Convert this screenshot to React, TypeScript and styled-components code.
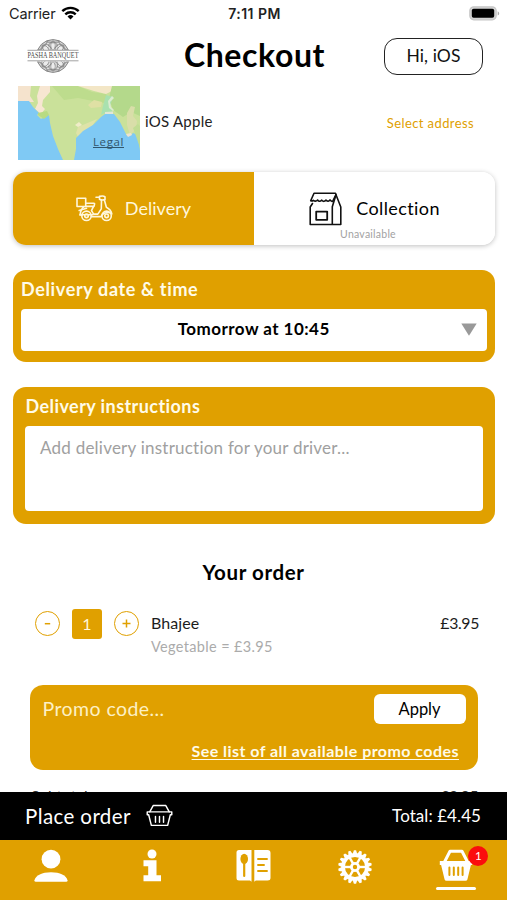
import React from "react";
import styled, { createGlobalStyle } from "styled-components";

const AMBER = "#e0a000";

const GlobalStyle = createGlobalStyle`
  *, *::before, *::after { box-sizing: border-box; }
  body { margin: 0; background: #fff; font-family: Lato, "Open Sans", sans-serif; color: #000; }
  h1, h2 { margin: 0; }
  svg { display: block; flex: none; }
  button, input, textarea { font-family: inherit; border: 0; margin: 0; padding: 0; outline: 0; }
`;

const Screen = styled.div`
  width: 507px;
  height: 900px;
  display: flex;
  flex-direction: column;
  overflow: hidden;
  background: #fff;
`;

const Scroll = styled.main`
  flex: 1;
  min-height: 0;
  overflow: hidden;
`;

const Text = styled.span<{ $size: number; $ls?: number; $bold?: boolean; $color?: string; $line?: number }>`
  font-size: ${(p) => p.$size}px;
  letter-spacing: ${(p) => p.$ls ?? 0}px;
  font-weight: ${(p) => (p.$bold ? 700 : 400)};
  color: ${(p) => p.$color ?? "#000"};
  line-height: ${(p) => p.$line ?? 24}px;
  white-space: nowrap;
`;

const StatusBar = styled.div`
  display: grid;
  grid-template-columns: 1fr auto 1fr;
  align-items: center;
  height: 26px;
  padding: 0 7px 0 9px;
  font-family: Inter, sans-serif;
`;

const StatusLeft = styled.div`
  display: flex;
  align-items: center;
  gap: 6px;
  font-size: 14.5px;
  letter-spacing: -0.15px;
  color: #222;
`;

const Clock = styled.div`
  font-size: 14px;
  font-weight: 600;
  letter-spacing: 0.45px;
  color: #222;
`;

const StatusRight = styled.div`
  display: flex;
  justify-content: flex-end;
`;

const Header = styled.header`
  display: grid;
  grid-template-columns: 1fr auto 1fr;
  align-items: center;
  height: 60px;
  padding: 0 24px 0 26px;
  > h1 { padding-bottom: 2px; }
`;

const HelloButton = styled.button`
  justify-self: end;
  width: 99px;
  height: 37px;
  padding-bottom: 2px;
  border: 1.5px solid #222;
  border-radius: 13px;
  background: #fff;
  font-size: 17.5px;
  letter-spacing: 0.1px;
  color: #111;
`;

const AddressRow = styled.section`
  display: flex;
  align-items: center;
  height: 74px;
  padding: 0 33px 0 18px;
`;

const AddressName = styled.div`
  padding-bottom: 4px;
`;

const MapThumb = styled.div`
  display: grid;
  width: 122px;
  height: 74px;
  margin-right: 5px;
  > * { grid-area: 1 / 1; }
`;

const Legal = styled.span`
  align-self: end;
  justify-self: end;
  margin: 0 16px 10px 0;
  font: 11.5px/16px "Open Sans", sans-serif;
  letter-spacing: 0.6px;
  color: #31566d;
  text-decoration: underline;
  text-decoration-skip-ink: none;
`;

const Push = styled.div`
  margin-left: auto;
  padding-bottom: 1px;
`;

const Toggle = styled.section`
  display: grid;
  grid-template-columns: 1fr 1fr;
  height: 73px;
  margin: 12px 12px 0 13px;
  border-radius: 13px;
  overflow: hidden;
  box-shadow: 0 1px 5px rgba(0, 0, 0, 0.25);
`;

const ToggleOption = styled.div<{ $active?: boolean }>`
  display: grid;
  grid-template-rows: 1fr auto;
  justify-items: center;
  background: ${(p) => (p.$active ? AMBER : "#fff")};
`;

const ToggleLabel = styled.div<{ $gap: number }>`
  grid-row: 1 / 3;
  grid-column: 1;
  display: flex;
  align-items: center;
  gap: ${(p) => p.$gap}px;
  > span { padding-bottom: 2px; }
`;

const ToggleNote = styled.div`
  grid-row: 2;
  grid-column: 1;
  margin: 0 0 4px -13px;
  font-size: 10.5px;
  line-height: 14px;
  letter-spacing: 0.24px;
  color: #a2a2a2;
`;

const Panel = styled.section<{ $top: number; $inset: number; $height: number }>`
  height: ${(p) => p.$height}px;
  margin: ${(p) => p.$top}px 12.5px 0 13px;
  padding: 7px ${(p) => p.$inset}px 0;
  border-radius: 13px;
  background: ${AMBER};
`;

const PanelTitle = styled.h2<{ $ls: number }>`
  margin: 0 0 7.5px 0.5px;
  font-size: 18px;
  line-height: 24px;
  font-weight: 700;
  letter-spacing: ${(p) => p.$ls}px;
  color: #fffbe8;
`;

const TimeSelect = styled.div`
  display: grid;
  grid-template-columns: 37px 1fr 37px;
  align-items: center;
  justify-items: center;
  height: 42px;
  border-radius: 4px;
  background: #fff;
  > span { padding-bottom: 1px; }
`;

const Instructions = styled.textarea`
  display: block;
  width: 100%;
  height: 85.5px;
  padding: 10px 15px;
  border-radius: 4px;
  resize: none;
  font-size: 17px;
  line-height: 24px;
  letter-spacing: 0.23px;
  &::placeholder { color: #a0a0a0; opacity: 1; }
`;

const OrderTitle = styled.h2`
  margin: 35px 0 0;
  text-align: center;
  font-size: 20.5px;
  line-height: 26px;
  letter-spacing: 0.6px;
`;

const OrderItem = styled.section`
  display: flex;
  align-items: flex-start;
  height: 61px;
  margin-top: 24px;
  padding: 0 28px 0 35px;
`;

const Stepper = styled.div`
  display: flex;
  align-items: center;
  gap: 12px;
  height: 30px;
  margin-right: 12px;
`;

const StepButton = styled.button`
  display: grid;
  place-items: center;
  width: 25px;
  height: 25px;
  border: 1.4px solid ${AMBER};
  border-radius: 50%;
  background: #fff;
`;

const Quantity = styled.div`
  width: 30px;
  height: 30px;
  border-radius: 3px;
  background: ${AMBER};
  color: #fff7dc;
  font-size: 16px;
  line-height: 29px;
  text-align: center;
`;

const ItemInfo = styled.div`
  display: flex;
  flex-direction: column;
  flex: 1;
  padding-top: 2.5px;
`;

const ItemPrice = styled.div`
  padding-top: 2.5px;
`;

const Promo = styled.section`
  display: flex;
  flex-direction: column;
  height: 85px;
  margin: 15px 29px 0 30px;
  padding: 9px 12.5px 0;
  border-radius: 13px;
  background: ${AMBER};
`;

const PromoRow = styled.div`
  display: flex;
  align-items: center;
  justify-content: space-between;
`;

const PromoInput = styled.input`
  width: 200px;
  background: none;
  font-size: 19.5px;
  letter-spacing: 0.42px;
  &::placeholder { color: #fdf0c4; opacity: 1; }
`;

const ApplyButton = styled.button`
  width: 92px;
  height: 30.5px;
  border-radius: 6px;
  background: #fff;
  font-size: 16.5px;
  letter-spacing: -0.05px;
  color: #000;
`;

const PromoLink = styled.a`
  align-self: flex-end;
  margin: 15px 6.5px 0 0;
  font-size: 16px;
  font-weight: 700;
  line-height: 24px;
  letter-spacing: 0.45px;
  color: #fffbe8;
  text-decoration: underline;
  text-decoration-skip-ink: none;
  text-underline-offset: 1.5px;
  text-decoration-thickness: 1px;
`;

const SummaryRow = styled.div`
  display: flex;
  justify-content: space-between;
  margin-top: 14px;
  padding: 0 29px 0 31px;
`;

const CheckoutBar = styled.div`
  display: flex;
  align-items: center;
  height: 48.5px;
  padding: 0 26px 0 25px;
  background: #000;
`;

const BasketSlot = styled.div`
  margin: 0 auto 0 15px;
`;

const TabBar = styled.nav`
  display: grid;
  grid-template-columns: repeat(5, 101.4px);
  height: 60px;
  background: ${AMBER};
`;

const Tab = styled.div`
  display: flex;
  flex-direction: column;
  align-items: center;
  padding-top: 9px;
`;

const BasketTab = styled.div`
  position: relative;
`;

const Badge = styled.span`
  position: absolute;
  top: -3px;
  right: -15px;
  width: 20px;
  height: 20px;
  border-radius: 50%;
  background: #fb0d0d;
  color: #fff;
  font-size: 11.5px;
  line-height: 20px;
  text-align: center;
`;

const ActiveLine = styled.div`
  width: 40px;
  height: 3px;
  margin-top: 5px;
  border-radius: 2px;
  background: #fff;
`;

function WifiIcon() {
  return (
    <svg width="19" height="14" viewBox="0 0 19 14" fill="none" stroke="#000" strokeWidth="2.4">
      <path d="M1.3 5.2a11.8 11.8 0 0 1 16.4 0M4.3 8.3a7.5 7.5 0 0 1 10.4 0" />
      <path d="M9.5 13.4 6.5 10.4a4.4 4.4 0 0 1 6 0z" fill="#000" stroke="none" />
    </svg>
  );
}

function BatteryIcon() {
  return (
    <svg width="31" height="15" viewBox="0 0 31 15">
      <rect x=".8" y=".8" width="26.4" height="13" rx="4" fill="#d4d4d4" stroke="#c6c6c6" strokeWidth="1.2" />
      <rect x="2.8" y="2.8" width="22.4" height="9" rx="1.8" fill="#000" />
      <path d="M28.7 5.2c2 .8 2 3.6 0 4.4z" fill="#aaa" />
    </svg>
  );
}

function PashaLogo() {
  const petals = [0, 45, 90, 135, 180, 225, 270, 315];
  return (
    <svg width="54" height="38" viewBox="0 0 54 38">
      <circle cx="27" cy="19" r="16.6" fill="#dcdcdc" />
      <g fill="none" stroke="#858585" strokeWidth="1">
        <circle cx="27" cy="19" r="16.4" />
        <circle cx="27" cy="19" r="14.6" strokeWidth=".5" />
        {petals.map((a) => (
          <g key={a} transform={`rotate(${a} 27 19)`}>
            <circle cx="27" cy="9.6" r="4.5" fill="#f6f6f6" fillOpacity=".6" />
            <path d="M27 3.5c3 3 3 7 0 10c-3-3-3-7 0-10z" strokeWidth=".8" />
            <path d="M20 4.5q7 3 14 0" strokeWidth=".7" />
          </g>
        ))}
      </g>
      <rect x="1" y="13" width="52" height="11.5" fill="#fff" />
      <path d="M1.5 13.3h51M1.5 23.8h51" stroke="#8a8a8a" strokeWidth=".8" />
      <text x="1.5" y="21" textLength="51" lengthAdjust="spacingAndGlyphs" fontFamily="Liberation Serif, serif" fontSize="7.6" fill="#4a4a4a">PASHA BANQUET</text>
    </svg>
  );
}

function MapPicture() {
  return (
    <svg width="122" height="74" viewBox="0 0 122 74">
      <rect width="122" height="74" fill="#cae19a" />
      <path d="M34 0h26l14 6 14 2 6 10-14-2-20-4-14 2z" fill="#bddc8d" />
      <path d="M0 0h13l-1 10 4 6H0z" fill="#f5e3cd" />
      <path d="M22 0h10l0 6-7 8-1 6 3 3-4 5-6-5 3-6-1-7z" fill="#f7e6d2" />
      <path d="M60 0h34l0 5-6 3-12-3z" fill="#f3e6c6" />
      <path d="M94 0h28v30l-9-4-8 5-10-7-4-12z" fill="#b4d98b" />
      <path d="M70 19l6-5 8 2-1 5-10 1z" fill="#dfe0a4" />
      <path d="M88 9l7 2-3 9 3 8-8-1-4 2 2-9z" fill="#a9e1af" />
      <path d="M94 10l2 2-4 4 1 5 3 3-1 1-4-3-1-7z" fill="#dcebd0" />
      <path d="M113 20l4 1-2 9 4 5-1 8-6 6-3-10 0-12z" fill="#d9dea9" />
      <path d="M60 41l19-8-5 7-8 6-6 5-2-4z" fill="#dfe3a8" />
      <path d="M57 39l4-3 3 3-4 2z" fill="#f0ecc8" />
      <path d="M0 15h11l4 6 6 6-2 2 4 4 8-4 1 8 3 13 5 13 5 11H0z" fill="#7fc9f4" />
      <path d="M20 27l9-2 2 4-5 4-6-4z" fill="#b8db82" />
      <path d="M56 74l2-11 0-11 7-7 10-6 8-8 4-3 9 0 6 8 4 8 3 6 4-1 2-2 5 2 2 16v9z" fill="#7fc9f4" />
      <path d="M108 48l5-1 1 2-4 2z" fill="#ece3d0" />
      <path d="M87 26l8-.5 0 2.5h-8z" fill="#e2e6d6" />
      <path d="M115 42l5-4 2 2v22l-3-9z" fill="#c1dd94" />
    </svg>
  );
}

function ScooterIcon() {
  return (
    <svg width="37" height="27" viewBox="0 0 37 27" fill="none" stroke="#fff7dc" strokeWidth="1.6" strokeLinejoin="round" strokeLinecap="round">
      <path d="M1 3.3h8.7v8.2H1z" />
      <path d="M10 8.2h7.8q1 0 .7 1.2l-.5 2H9.8" />
      <path d="M8 11.7q-3.2 2.5-4 8.3h2.2M17.4 11.6l-1.9 4 2.1 3.5h4.2l3.5-5.2.2-8.8" />
      <path d="M3.2 15.4l7.3-2.2" />
      <path d="M20 2.2h3.2M23.5 1.4q4-1 5.5.5v2.5q-3 1.2-5.5-.2z" />
      <path d="M28.3 4.7l2.1 7.6q4.6 2.3 5.4 6.6-3.2-2.3-7-.8-2.6 1.2-3.8 3.5h-9.6" />
      <circle cx="10.5" cy="20.8" r="4.7" />
      <circle cx="10.5" cy="20.8" r="1.8" />
      <circle cx="30.6" cy="20.8" r="4.7" />
      <circle cx="30.6" cy="20.8" r="1.8" />
      <path d="M4 19.8h12.8" />
    </svg>
  );
}

function BagIcon() {
  return (
    <svg width="33" height="34" viewBox="0 0 33 34" fill="none" stroke="#111" strokeWidth="1.6" strokeLinejoin="round" strokeLinecap="round">
      <path d="M5 1.2h21.5l.5 1.5-3.2 6.5q-1.6.6-2.8-1.3-1.6 2.4-4 .2-2.2 2.4-4.2.1-2.4 2.2-4.2-.2-2 2.2-4.2.3-1.2 1-2.7.5z" />
      <path d="M3.5 11.5l-2.3 3.5v17.500h30.600V15L27 2.700l-3.700 12v17.500" />
      <path d="M7.2 19.6h11v8.200h-11z" strokeWidth="1.8" />
    </svg>
  );
}

function OutlineBasketIcon() {
  return (
    <svg width="27" height="23" viewBox="0 0 28 24" fill="none" stroke="#fff" strokeWidth="1.5" strokeLinejoin="round" strokeLinecap="round">
      <path d="M3.8 8.2 7.4 1.6h13.2l3.6 6.6" />
      <path d="M1.2 8.2h25.6v3h-1.5L22.5 22.3h-17L2.7 11.2H1.2z" />
      <path d="M9.8 13v6M14 13v6M18.2 13v6" />
    </svg>
  );
}

function PersonIcon() {
  return (
    <svg width="34" height="33" viewBox="0 0 34 33" fill="#fff">
      <circle cx="17" cy="10.2" r="9.4" />
      <path d="M.5 31.2C1.600 26.400 8 23.200 17 23.200s15.400 3.200 16.500 8q.2 1.500-1.300 1.500H1.800Q.3 32.700.5 31.200z" />
    </svg>
  );
}

function InfoIcon() {
  return (
    <svg width="18" height="33" viewBox="0 0 18 33" fill="#fff">
      <circle cx="9" cy="5" r="4.5" />
      <path d="M.5 11.300h13v15H18v6H.5v-6h4.700v-9H.5z" />
    </svg>
  );
}

function MenuIcon() {
  return (
    <svg width="35" height="33" viewBox="0 0 35 33">
      <path d="M3 1h12.500v31.800L14 31.500H3Q.5 31.500.5 29V3.500Q.5 1 3 1z" fill="#fff" />
      <path d="M18.300 1H31.500Q34.500 1 34.500 4v25q0 2.500-3 2.500H19.800l-1.500 1.300z" fill="#fff" />
      <ellipse cx="8.2" cy="9.9" rx="3.8" ry="5.2" fill={AMBER} />
      <path d="M8.200 13.500V27" stroke={AMBER} strokeWidth="2.2" strokeLinecap="round" />
      <path d="M22 10h9M22 16h6M22 22h9" stroke={AMBER} strokeWidth="1.9" strokeLinecap="round" />
    </svg>
  );
}

function GearIcon() {
  const teeth = Array.from({ length: 18 }, (_, i) => i * 20);
  const spokes = [30, 90, 150, 210, 270, 330];
  return (
    <svg width="34" height="35" viewBox="-17 -18 34 35">
      {teeth.map((a) => (
        <path key={a} d="M-2.300-13-1.100-16.800h2.200L2.300-13z" fill="#fff" transform={`rotate(${a})`} />
      ))}
      <circle r="11.9" fill="none" stroke="#fff" strokeWidth="3.6" />
      {spokes.map((a) => (
        <path key={a} d="M0-3v-8" stroke="#fff" strokeWidth="2.4" transform={`rotate(${a})`} />
      ))}
      <circle r="3.6" fill="none" stroke="#fff" strokeWidth="2.8" />
    </svg>
  );
}

function SolidBasketIcon() {
  return (
    <svg width="34" height="33" viewBox="0 0 34 33">
      <path d="M5.500 13 11 2.200h12l5.500 10.800" fill="none" stroke="#fff" strokeWidth="3" strokeLinejoin="round" />
      <path d="M.8 12h32.400v4h-1.300l-3.500 14.500q-.4 1.200-1.800 1.200H7.400q-1.400 0-1.800-1.200L2.100 16H.8z" fill="#fff" />
      <path d="M10.400 18.500v7.500M14.800 18.500v7.500M19.200 18.500v7.500M23.600 18.500v7.500" stroke={AMBER} strokeWidth="2" strokeLinecap="round" />
    </svg>
  );
}

export default function App() {
  return (
    <>
      <GlobalStyle />
      <Screen>
        <Scroll>
          <StatusBar>
            <StatusLeft>
              Carrier
              <WifiIcon />
            </StatusLeft>
            <Clock>7:11 PM</Clock>
            <StatusRight>
              <BatteryIcon />
            </StatusRight>
          </StatusBar>
          <Header>
            <PashaLogo />
            <Text as="h1" $size={32} $ls={0.6} $bold $line={40}>Checkout</Text>
            <HelloButton>Hi, iOS</HelloButton>
          </Header>
          <AddressRow>
            <MapThumb>
              <MapPicture />
              <Legal>Legal</Legal>
            </MapThumb>
            <AddressName>
              <Text $size={15} $ls={0.25} $color="#222">iOS Apple</Text>
            </AddressName>
            <Push>
              <Text $size={13} $ls={0.4} $color={AMBER}>Select address</Text>
            </Push>
          </AddressRow>
          <Toggle>
            <ToggleOption $active>
              <ToggleLabel $gap={12}>
                <ScooterIcon />
                <Text $size={18} $ls={0.04} $color="#fff7dc">Delivery</Text>
              </ToggleLabel>
            </ToggleOption>
            <ToggleOption>
              <ToggleLabel $gap={14}>
                <BagIcon />
                <Text $size={18} $ls={0.4}>Collection</Text>
              </ToggleLabel>
              <ToggleNote>Unavailable</ToggleNote>
            </ToggleOption>
          </Toggle>

          <Panel $top={25} $inset={7.5} $height={92}>
            <PanelTitle $ls={0.65}>Delivery date &amp; time</PanelTitle>
            <TimeSelect>
              <span />
              <Text $size={17} $ls={0.46} $bold>Tomorrow at 10:45</Text>
              <svg width="16" height="13" viewBox="0 0 16 13">
                <path d="M.3.5h15.400L8 12.800z" fill="#999" />
              </svg>
            </TimeSelect>
          </Panel>

          <Panel $top={25} $inset={12} $height={136.5}>
            <PanelTitle $ls={0.43}>Delivery instructions</PanelTitle>
            <Instructions placeholder="Add delivery instruction for your driver..." />
          </Panel>

          <OrderTitle>Your order</OrderTitle>
          <OrderItem>
            <Stepper>
              <StepButton aria-label="Remove one">
                <svg width="9" height="9" viewBox="0 0 9 9" stroke={AMBER} strokeWidth="1.5">
                  <path d="M1.800 4.700h5.400" />
                </svg>
              </StepButton>
              <Quantity>1</Quantity>
              <StepButton aria-label="Add one">
                <svg width="9" height="9" viewBox="0 0 9 9" stroke={AMBER} strokeWidth="1.5">
                  <path d="M.5 4.500h8M4.500.5v8" />
                </svg>
              </StepButton>
            </Stepper>
            <ItemInfo>
              <Text $size={16} $ls={0.1} $color="#1c1c1c">Bhajee</Text>
              <Text $size={14.5} $ls={0.34} $color="#ababab">Vegetable = £3.95</Text>
            </ItemInfo>
            <ItemPrice>
              <Text $size={15.8} $ls={-0.35} $color="#1c1c1c">£3.95</Text>
            </ItemPrice>
          </OrderItem>

          <Promo>
            <PromoRow>
              <PromoInput placeholder="Promo code..." />
              <ApplyButton>Apply</ApplyButton>
            </PromoRow>
            <PromoLink>See list of all available promo codes</PromoLink>
          </Promo>

          <SummaryRow>
            <Text $size={15.5} $color="#333">Subtotal</Text>
            <Text $size={15.5} $ls={-0.4} $color="#333">£3.95</Text>
          </SummaryRow>
        </Scroll>

        <CheckoutBar>
          <Text $size={20.5} $ls={0.4} $color="#fff">Place order</Text>
          <BasketSlot>
            <OutlineBasketIcon />
          </BasketSlot>
          <Text $size={17} $ls={0.07} $color="#fff">Total: £4.45</Text>
        </CheckoutBar>
        <TabBar>
          <Tab><PersonIcon /></Tab>
          <Tab><InfoIcon /></Tab>
          <Tab><MenuIcon /></Tab>
          <Tab><GearIcon /></Tab>
          <Tab>
            <BasketTab>
              <SolidBasketIcon />
              <Badge>1</Badge>
            </BasketTab>
            <ActiveLine />
          </Tab>
        </TabBar>
      </Screen>
    </>
  );
}
